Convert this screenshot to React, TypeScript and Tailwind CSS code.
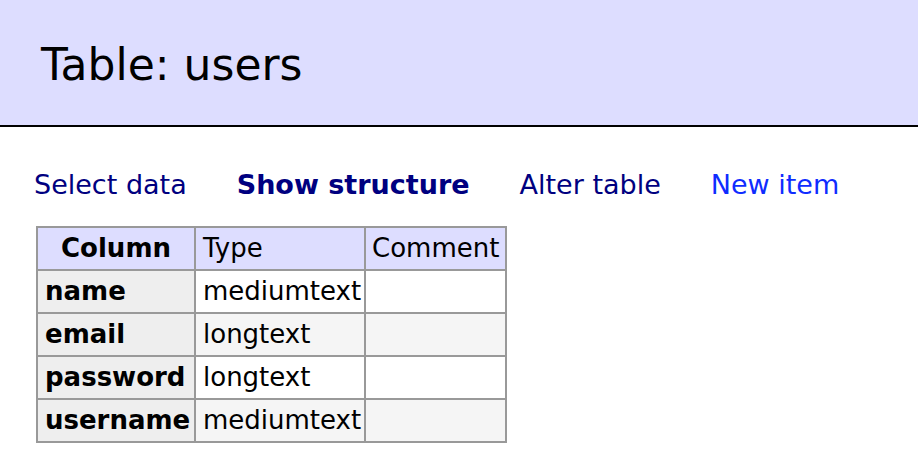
const rows = [
  { name: 'name', type: 'mediumtext', odd: false },
  { name: 'email', type: 'longtext', odd: true },
  { name: 'password', type: 'longtext', odd: false },
  { name: 'username', type: 'mediumtext', odd: true },
];

export default function App() {
  return (
    <div className="min-h-[454px] bg-white text-black font-['DejaVu_Sans',Verdana,sans-serif]">
      <header className="h-[127px] bg-[#ddddff] border-b-2 border-black flex items-center pl-[41px]">
        <h2 className="text-[44px] leading-none pt-[4px]">Table: users</h2>
      </header>

      <nav className="flex gap-[50px] pl-[34px] pt-[41px] text-[27px] leading-[33px]">
        <a className="text-[#000080]">Select data</a>
        <a className="text-[#000080] font-bold">Show structure</a>
        <a className="text-[#000080]">Alter table</a>
        <a className="text-[#0f2cff]">New item</a>
      </nav>

      <div className="pl-[36px] pt-[25px]">
        <table className="table-fixed border-collapse w-[469px] text-[26px] leading-[33px] whitespace-nowrap">
          <colgroup>
            <col className="w-[158px]" />
            <col className="w-[170px]" />
            <col className="w-[141px]" />
          </colgroup>
          <thead>
            <tr className="bg-[#ddddff]">
              <th className="border-2 border-[#999] px-[7px] py-[4px] text-center font-bold">Column</th>
              <td className="border-2 border-[#999] px-[7px] py-[4px]">Type</td>
              <td className="border-2 border-[#999] px-[6px] py-[4px]">Comment</td>
            </tr>
          </thead>
          <tbody>
            {rows.map((r) => (
              <tr key={r.name} className={r.odd ? 'bg-[#f5f5f5]' : 'bg-white'}>
                <th className="border-2 border-[#999] bg-[#eeeeee] px-[7px] py-[4px] text-left font-bold">{r.name}</th>
                <td className="border-2 border-[#999] px-[7px] py-[4px]">{r.type}</td>
                <td className="border-2 border-[#999] px-[7px] py-[4px]"></td>
              </tr>
            ))}
          </tbody>
        </table>
      </div>
    </div>
  );
}
